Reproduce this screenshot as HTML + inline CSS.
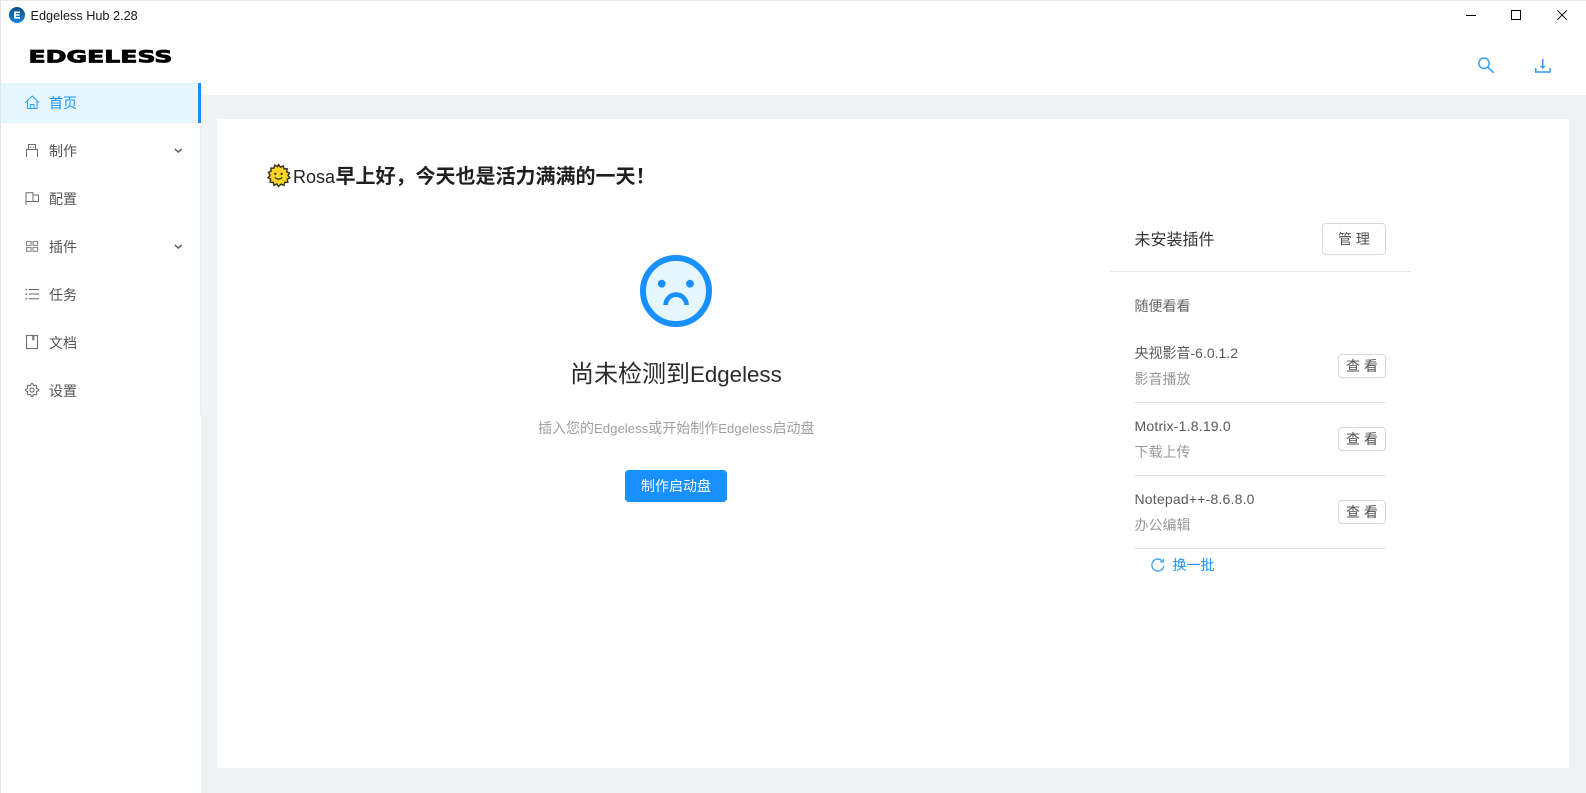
<!DOCTYPE html>
<html lang="zh-CN">
<head>
<meta charset="utf-8">
<title>Edgeless Hub 2.28</title>
<style>
html,body{margin:0;padding:0;width:1586px;height:793px;overflow:hidden;background:#fff}
body{position:relative;font-family:"Liberation Sans","Noto Sans CJK SC",sans-serif;color:#333}
.a{position:absolute;white-space:nowrap}
svg{position:absolute;overflow:visible}
.nav{position:absolute;left:49px;font-size:14px;line-height:20px;color:#545454;white-space:nowrap}
.btn{position:absolute;box-sizing:border-box;background:#fff;border:1px solid #d9d9d9;border-radius:4px;text-align:center;color:#505050;white-space:nowrap;box-shadow:0 1px 1px rgba(0,0,0,.03)}
.line{position:absolute;height:1px;background:#e6e6e6}
.t{position:absolute;left:1134.500px;font-size:14px;line-height:20px;color:#595959;white-space:nowrap;letter-spacing:.2px}
.s{position:absolute;left:1134.500px;font-size:14px;line-height:20px;color:#999;white-space:nowrap}
.v{left:1338px;width:48px;height:24px;font-size:14px;line-height:22px}
.l{left:1134px;width:252px}
</style>
</head>
<body>
<div class="a" style="left:0;top:0;width:1586px;height:1px;background:#e8e8e8"></div>
<div class="a" style="left:0;top:0;width:1px;height:793px;background:#e4e4e4"></div>
<div class="a" style="left:200px;top:95px;width:1386px;height:698px;background:#f0f2f5"></div>
<div class="a" style="left:200px;top:415px;width:1px;height:378px;background:#fff"></div>
<div class="a" style="left:200px;top:80px;width:1px;height:15px;background:#ececec"></div>
<div class="a" style="left:200px;top:123px;width:1px;height:292px;background:#ececec"></div>
<div class="a" style="left:217px;top:119px;width:1352px;height:649px;background:#fff"></div>

<svg style="left:9px;top:7px" width="16" height="16" viewBox="0 0 16 16"><defs><linearGradient id="g" x1="0" y1="0" x2="0" y2="1"><stop offset="0" stop-color="#0d4f8c"/><stop offset="1" stop-color="#1285d8"/></linearGradient></defs><circle cx="8" cy="8" r="8" fill="url(#g)"/><path d="M5 4.500h6v1.600H7v1.200h3.600v1.500H7v1.200h4v1.600H5z" fill="#fff"/></svg>
<div class="a" style="left:30.500px;top:8px;font-size:12.700px;line-height:16px;color:#1a1a1a">Edgeless Hub 2.28</div>

<svg style="left:1420px;top:0" width="166" height="30" viewBox="0 0 166 30" fill="none" stroke="#000" stroke-width="1"><path d="M46 15.500h10"/><rect x="91.500" y="10.500" width="9" height="9"/><path d="M137.300 10.300l9.500 9.500M146.800 10.300l-9.500 9.500"/></svg>

<svg style="left:28px;top:50px" width="146" height="14" viewBox="0 0 146 14"><text x=".5" y="12.600" textLength="144" lengthAdjust="spacingAndGlyphs" font-family="DejaVu Sans" font-size="16.500" font-weight="700" fill="#000" stroke="#000" stroke-width=".8">EDGELESS</text></svg>

<svg style="left:1478px;top:57px" width="17" height="17" viewBox="0 0 17 17" fill="none" stroke="#2f9bf4" stroke-width="1.400"><circle cx="6" cy="6.300" r="5.200"/><path d="M9.800 10.200l5.900 5.600" stroke-width="1.600"/></svg>
<svg style="left:1535px;top:59px" width="16" height="14" viewBox="0 0 16 14" fill="none" stroke="#2f9bf4" stroke-width="1.500"><path d="M7.700 0v7.500"/><path d="M4.700 6.800h6L7.700 10z" fill="#2f9bf4" stroke="none"/><path d="M.7 9v4h14.300V9"/></svg>

<div class="a" style="left:1px;top:83px;width:197px;height:40px;background:#e6f6ff"></div>
<div class="a" style="left:198px;top:83px;width:3px;height:40px;background:#1890ff"></div>

<svg style="left:25px;top:95px" width="15" height="15" viewBox="0 0 15 15" fill="none" stroke="#3a9ef5" stroke-width="1.100"><path d="M.3 7.600L7.200 1l6.900 6.600M2.500 6.300V13.500H12V6.300M5.500 13.500V9.500H9V13.500"/></svg>
<div class="nav" style="top:93px;color:#1890ff">首页</div>

<svg style="left:26px;top:144px" width="12" height="13" viewBox="0 0 12 13" fill="none" stroke="#6e6e6e" stroke-width="1"><path d="M.5 13V5.500H11.500V13M2.500 5.500V.5H9.500V5.500"/><path d="M4 3h1.300M6.800 3h1.300"/></svg>
<div class="nav" style="top:141px">制作</div>
<svg style="left:174px;top:148px" width="9" height="6" viewBox="0 0 9 6" fill="none" stroke="#666" stroke-width="1.600"><path d="M.8 1l3.500 3L7.800 1"/></svg>

<svg style="left:25px;top:192px" width="14" height="13" viewBox="0 0 14 13" fill="none" stroke="#6e6e6e" stroke-width="1"><path d="M1 13V.8H8V9.500H1M8 3H13.500V9.500H8"/></svg>
<div class="nav" style="top:189px">配置</div>

<svg style="left:26px;top:241px" width="12" height="11" viewBox="0 0 12 11" fill="#fff" stroke="#8a8a8a" stroke-width="1.100"><rect x=".5" y=".5" width="4.600" height="3.800"/><rect x="7" y=".5" width="4.600" height="3.800"/><rect x=".5" y="6.500" width="4.600" height="3.800"/><rect x="7" y="6.500" width="4.600" height="3.800"/></svg>
<div class="nav" style="top:237px">插件</div>
<svg style="left:174px;top:244px" width="9" height="6" viewBox="0 0 9 6" fill="none" stroke="#666" stroke-width="1.600"><path d="M.8 1l3.500 3L7.800 1"/></svg>

<svg style="left:25px;top:288px" width="14" height="12" viewBox="0 0 14 12" fill="none" stroke="#666" stroke-width="1"><path d="M4 1.500H14M4 6H14M4 10.700H14"/><path d="M.5 .7h1.600v1.600H.5zM.5 5.200h1.600v1.600H.5zM.5 9.900h1.600v1.600H.5z" fill="#777" stroke="none"/></svg>
<div class="nav" style="top:285px">任务</div>

<svg style="left:26px;top:335px" width="12" height="14" viewBox="0 0 12 14" fill="none" stroke="#707070" stroke-width="1.100"><rect x=".5" y=".5" width="11" height="13"/><path d="M6 1v4.800l1.300-1.100 1.300 1.100V1z" fill="#888" stroke="none"/></svg>
<div class="nav" style="top:333px">文档</div>

<svg style="left:25px;top:383px" width="14" height="14" viewBox="0 0 24 24" fill="none" stroke="#666" stroke-width="1.800"><circle cx="12" cy="12" r="3.600"/><path d="M19.400 15a1.650 1.650 0 0 0 .33 1.820l.06.06a2 2 0 0 1 0 2.830 2 2 0 0 1-2.830 0l-.06-.06a1.650 1.650 0 0 0-1.820-.33 1.650 1.650 0 0 0-1 1.510V21a2 2 0 0 1-2 2 2 2 0 0 1-2-2v-.09A1.650 1.650 0 0 0 9 19.400a1.650 1.650 0 0 0-1.820.33l-.06.06a2 2 0 0 1-2.830 0 2 2 0 0 1 0-2.830l.06-.06a1.650 1.650 0 0 0 .33-1.820 1.650 1.650 0 0 0-1.510-1H3a2 2 0 0 1-2-2 2 2 0 0 1 2-2h.09A1.650 1.650 0 0 0 4.600 9a1.650 1.650 0 0 0-.33-1.820l-.06-.06a2 2 0 0 1 0-2.830 2 2 0 0 1 2.830 0l.06.06a1.650 1.650 0 0 0 1.820.33H9a1.650 1.650 0 0 0 1-1.510V3a2 2 0 0 1 2-2 2 2 0 0 1 2 2v.09a1.650 1.650 0 0 0 1 1.510 1.650 1.650 0 0 0 1.820-.33l.06-.06a2 2 0 0 1 2.830 0 2 2 0 0 1 0 2.830l-.06.06a1.650 1.650 0 0 0-.33 1.820V9a1.650 1.650 0 0 0 1.510 1H21a2 2 0 0 1 2 2 2 2 0 0 1-2 2h-.09a1.650 1.650 0 0 0-1.510 1z"/></svg>
<div class="nav" style="top:381px">设置</div>

<svg style="left:267px;top:164px" width="23" height="23" viewBox="0 0 22 22"><path d="M11 .6l1.900 2.500 2.600-1.300.8 2.900 2.900-.1-.3 2.900 2.600 1.200-1.500 2.400 1.900 2.100-2.500 1.400.5 2.900-2.900.1-.8 2.800-2.700-1.200L11 21.400l-1.600-2.300-2.700 1.200-.8-2.800-2.900-.1.500-2.900-2.500-1.400 1.900-2.100L1.400 8l2.600-1.200-.3-2.900 2.900.1.800-2.900 2.600 1.300z" fill="#fad41e" stroke="#3a3320" stroke-width="1.400"/><circle cx="8" cy="9.500" r="1.100" fill="#333"/><circle cx="14" cy="9.500" r="1.100" fill="#333"/><path d="M7.300 12.800q3.700 3.400 7.400 0" fill="none" stroke="#333" stroke-width="1.100"/></svg>
<div class="a" style="left:293px;top:163px;font-size:18px;line-height:28px;color:#222">Rosa</div>
<div class="a" style="left:335.500px;top:163px;font-size:20px;line-height:28px;color:#1f1f1f;font-weight:700">早上好，今天也是活力满满的一天！</div>

<svg style="left:640px;top:255px" width="72" height="72" viewBox="0 0 72 72"><circle cx="36" cy="36" r="33" fill="#e6f6ff" stroke="#1890ff" stroke-width="6"/><circle cx="21.700" cy="28.700" r="3.900" fill="#1890ff"/><circle cx="50" cy="28.700" r="3.900" fill="#1890ff"/><path d="M25.700 50A10.400 10.400 0 0 1 46.500 50" fill="none" stroke="#1890ff" stroke-width="4.700"/></svg>

<div class="a" style="left:570px;top:359px;font-size:24px;line-height:32px;color:#2b2b2b">尚未检测到<span style="font-size:22.300px">Edgeless</span></div>
<div class="a" style="left:538px;top:418px;font-size:14px;line-height:20px;color:#a0a0a0">插入您的<span style="font-size:13.200px">Edgeless</span>或开始制作<span style="font-size:13.200px">Edgeless</span>启动盘</div>
<div class="a" style="left:625px;top:470px;width:102px;height:32px;border-radius:4px;background:#1890ff;color:#fff;font-size:14px;line-height:32px;text-align:center;box-shadow:0 2px 0 rgba(0,0,0,.03)">制作启动盘</div>

<div class="a" style="left:1134.500px;top:229px;font-size:16px;line-height:24px;color:#333">未安装插件</div>
<div class="btn" style="left:1322px;top:223px;width:64px;height:32px;font-size:14px;line-height:30px">管 理</div>
<div class="line" style="left:1110px;top:271px;width:301px"></div>

<div class="a" style="left:1134.500px;top:296px;font-size:14px;line-height:20px;color:#666">随便看看</div>

<div class="t" style="top:343px;letter-spacing:0">央视影音-6.0.1.2</div>
<div class="s" style="top:369px">影音播放</div>
<div class="btn v" style="top:354px">查 看</div>
<div class="line l" style="top:402px"></div>

<div class="t" style="top:416px">Motrix-1.8.19.0</div>
<div class="s" style="top:442px">下载上传</div>
<div class="btn v" style="top:427px">查 看</div>
<div class="line l" style="top:475px"></div>

<div class="t" style="top:489px">Notepad++-8.6.8.0</div>
<div class="s" style="top:515px">办公编辑</div>
<div class="btn v" style="top:500px">查 看</div>
<div class="line l" style="top:548px"></div>

<svg style="left:1151px;top:558px" width="14" height="14" viewBox="0 0 14 14" fill="none" stroke="#3a9ef5" stroke-width="1.300"><path d="M11.300 3A6 6 0 1 0 12.800 8"/><path d="M12.300 .8V4H9.100" stroke-width="1.200"/></svg>
<div class="a" style="left:1172.500px;top:555px;font-size:14px;line-height:20px;color:#1890ff">换一批</div>
</body>
</html>
